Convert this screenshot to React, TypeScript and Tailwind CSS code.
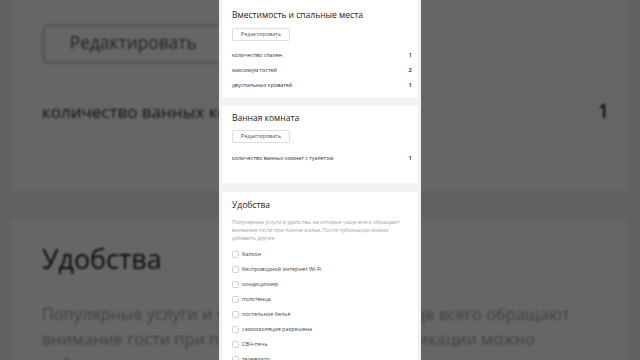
import React from "react";

const font = "font-['Open_Sans','Noto_Sans',sans-serif]";

function Row({ label, value }: { label: string; value: string }) {
  return (
    <div className="h-[15px] flex items-center justify-between">
      <span className="text-[5.4px] leading-[8px] text-[#333] whitespace-nowrap">{label}</span>
      <span className="text-[6px] leading-[8px] font-semibold text-[#222]">{value}</span>
    </div>
  );
}

function EditButton() {
  return (
    <div className="w-[58px] h-[13px] border border-[#dcdcdc] rounded-[2px] flex items-center justify-center text-[5.5px] text-[#555] bg-white">
      Редактировать
    </div>
  );
}

function Check({ label }: { label: string }) {
  return (
    <div className="h-[15px] flex items-center gap-[3px]">
      <div className="w-[7px] h-[7px] border border-[#cfcfcf] rounded-[1.5px] bg-white shrink-0" />
      <span className="text-[5.5px] leading-[8px] text-[#444] whitespace-nowrap">{label}</span>
    </div>
  );
}

function Page() {
  const amenities = [
    "балкон",
    "беспроводной интернет Wi-Fi",
    "кондиционер",
    "полотенца",
    "постельное бельё",
    "самоизоляция разрешена",
    "СВЧ-печь",
    "телевизор",
    "утюг",
  ];
  return (
    <div className={`w-[202px] bg-[#f2f2f2] flex flex-col ${font}`}>
      <div className="mx-[3px] bg-white pl-[10px] pr-[6px] pt-[9px] pb-[5.5px]">
        <div className="h-[12px] flex items-center text-[8.5px] text-[#222]">Вместимость и спальные места</div>
        <div className="mt-[7px]">
          <EditButton />
        </div>
        <div className="mt-[6.5px]">
          <Row label="количество спален" value="1" />
          <Row label="максимум гостей" value="2" />
          <Row label="двуспальных кроватей" value="1" />
        </div>
      </div>
      <div className="mx-[3px] mt-[8px] bg-white pl-[10px] pr-[6px] pt-[6px] pb-[17.5px]">
        <div className="h-[12px] flex items-center text-[8.5px] text-[#222]">Ванная комната</div>
        <div className="mt-[6px]">
          <EditButton />
        </div>
        <div className="mt-[7.5px]">
          <Row label="количество ванных комнат с туалетом" value="1" />
        </div>
      </div>
      <div className="mx-[3px] mt-[9px] bg-white pl-[10px] pr-[6px] pt-[7px] pb-[10px]">
        <div className="h-[12px] flex items-center text-[8.5px] text-[#222]">Удобства</div>
        <p className="mt-[7px] text-[5.2px] leading-[8px] text-[#a0a0a0] whitespace-nowrap">
          Популярные услуги и удобства, на которые чаще всего обращают
          <br />
          внимание гости при поиске жилья. После публикации можно
          <br />
          добавить другие
        </p>
        <div className="mt-[4.5px]">
          {amenities.map((a) => (
            <Check key={a} label={a} />
          ))}
        </div>
      </div>
    </div>
  );
}

export default function App() {
  return (
    <div className="relative w-[640px] h-[360px] overflow-hidden bg-[#f2f2f2]">
      <div className="absolute left-[219px] top-0 origin-top-left [transform:translate(-218px,-386px)_scale(3.15)] blur-[0.4px]">
        <Page />
      </div>
      <div className="absolute inset-0 bg-black/60" />
      <div className="absolute left-[219px] top-0 h-[360px] overflow-hidden">
        <Page />
      </div>
    </div>
  );
}
